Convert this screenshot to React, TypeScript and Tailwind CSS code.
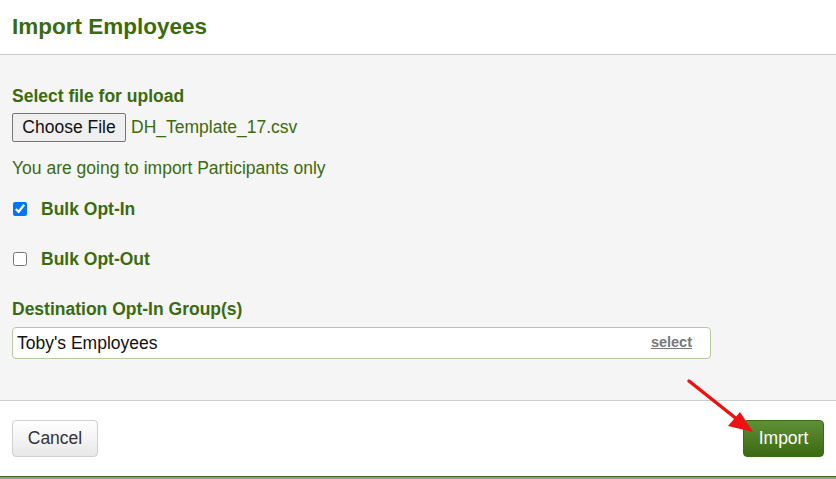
export default function App() {
  return (
    <div className="relative w-[836px] h-[479px] bg-white font-['Liberation_Sans',Arial,sans-serif] text-[#3b6b0f] overflow-hidden">
      {/* header */}
      <div className="h-[55px] border-b border-[#cccccc] flex items-center px-3">
        <h1 className="text-[22.5px] font-bold leading-none">Import Employees</h1>
      </div>

      {/* body */}
      <div className="bg-[#f5f5f5] h-[346px] px-3 pt-[31px] border-b border-[#cccccc]">
        <div className="text-[17.5px] font-bold leading-5">Select file for upload</div>
        <div className="mt-[7px] flex items-center gap-[5px]">
          <div className="h-[29px] w-[114px] flex items-center justify-center bg-[#efefef] border border-[#767676] rounded-[2px] text-[17.5px] text-[#111]">
            Choose File
          </div>
          <span className="text-[17.5px]">DH_Template_17.csv</span>
        </div>
        <div className="mt-[16px] text-[17.5px] leading-5">You are going to import Participants only</div>

        <label className="mt-[21px] flex items-center h-5">
          <input type="checkbox" defaultChecked className="w-[14px] h-[14px] m-0 ml-[1px] accent-[#0075ff]" />
          <span className="ml-[14px] text-[17.5px] font-bold">Bulk Opt-In</span>
        </label>
        <label className="mt-[30px] flex items-center h-5">
          <input type="checkbox" className="w-[14px] h-[14px] m-0 ml-[1px]" />
          <span className="ml-[14px] text-[17.5px] font-bold">Bulk Opt-Out</span>
        </label>

        <div className="mt-[30px] text-[17.5px] font-bold leading-5">Destination Opt-In Group(s)</div>
        <div className="mt-[8px] w-[699px] h-[32px] bg-white border border-[#b5cb9f] rounded-[4px] flex items-center justify-between pl-[4px] pr-[18px]">
          <span className="text-[17.5px] text-[#111]">Toby's Employees</span>
          <span className="text-[14.5px] font-bold text-[#777] underline">select</span>
        </div>
      </div>

      {/* footer */}
      <div className="h-[76px] flex items-center justify-between px-3 border-b border-[#3d6a1c]">
        <button className="h-[37px] w-[86px] rounded-[4px] border border-[#cfcfcf] bg-gradient-to-b from-white to-[#e8e8e8] text-[17.5px] text-[#333]">
          Cancel
        </button>
        <button className="h-[37px] w-[81px] rounded-[4px] border border-[#3c6b15] bg-gradient-to-b from-[#5f8f35] to-[#3b6a12] text-[17.5px] text-white">
          Import
        </button>
      </div>
      <div className="h-[2px] bg-[#9a9a9a]" />

      {/* annotation arrow */}
      <svg className="absolute left-0 top-0 pointer-events-none" width="836" height="479">
        <line x1="689" y1="381" x2="738" y2="420" stroke="#ee1111" strokeWidth="3.5" strokeLinecap="round" />
        <polygon points="753,432 728,426 740,412" fill="#ee1111" />
      </svg>
    </div>
  );
}
